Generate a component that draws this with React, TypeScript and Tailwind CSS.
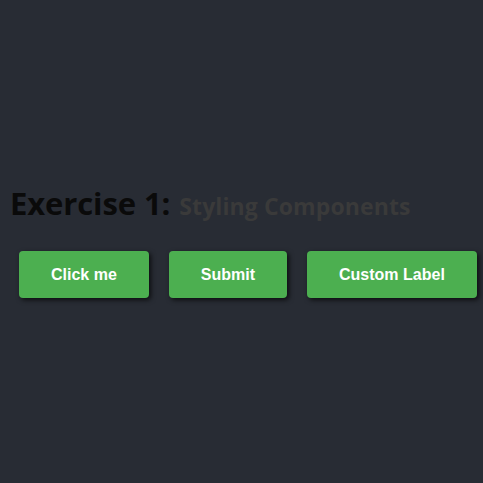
export default function App() {
  const labels = ['Click me', 'Submit', 'Custom Label'];
  return (
    <div className="min-h-screen bg-[#282c34] flex flex-col justify-center">
      <h1 className="ml-[10px] flex items-baseline gap-[9px] font-['Open_Sans',sans-serif] font-bold">
        <span className="text-[31px] leading-[36px] text-[#0a0a0a] tracking-[-0.1px]">Exercise 1:</span>
        <span className="text-[23px] text-[#3a3a3a] tracking-[0.1px]">Styling Components</span>
      </h1>
      <div className="flex gap-[20px] pl-[19px] mt-[28px]">
        {labels.map((l) => (
          <button
            key={l}
            className="h-[47px] px-[32px] rounded-[4px] bg-[#4caf50] text-white font-bold text-[16px] font-['Liberation_Sans',Arial,sans-serif] shadow-[2px_2px_5px_rgba(0,0,0,0.7)]"
          >
            {l}
          </button>
        ))}
      </div>
    </div>
  );
}
